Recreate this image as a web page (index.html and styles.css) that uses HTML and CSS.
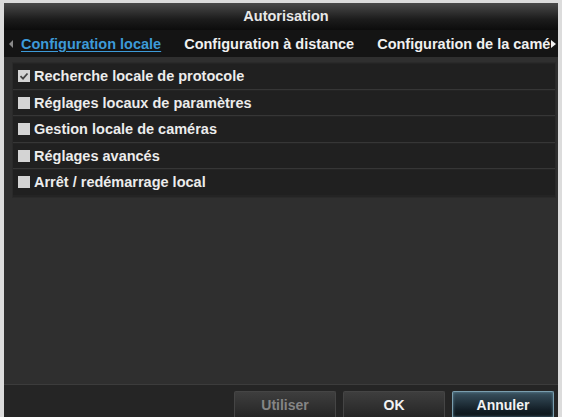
FILE: index.html
```html
<!DOCTYPE html>
<html lang="fr">
<head>
<meta charset="utf-8">
<title>Autorisation</title>
<link rel="stylesheet" href="styles.css">
</head>
<body>
<div class="window">
  <div class="titlebar">Autorisation</div>
  <div class="tabs">
    <span class="arrow arrow-left"></span>
    <span class="tab active">Configuration locale</span>
    <span class="tab">Configuration à distance</span>
    <span class="tab last">Configuration de la camé</span>
    <span class="arrow arrow-right"></span>
  </div>
  <div class="content">
    <ul class="list">
      <li class="row"><span class="cb checked"><svg viewBox="0 0 12 12" width="12" height="12"><path d="M2.5 6.2 L5 8.6 L9.5 3.5" fill="none" stroke="#444" stroke-width="1.8"/></svg></span>Recherche locale de protocole</li>
      <li class="row"><span class="cb"></span>Réglages locaux de paramètres</li>
      <li class="row"><span class="cb"></span>Gestion locale de caméras</li>
      <li class="row"><span class="cb"></span>Réglages avancés</li>
      <li class="row"><span class="cb"></span>Arrêt / redémarrage local</li>
    </ul>
  </div>
  <div class="footer">
    <button class="btn disabled">Utiliser</button>
    <button class="btn">OK</button>
    <button class="btn primary">Annuler</button>
  </div>
</div>
</body>
</html>
```
FILE: styles.css
```css
html, body {
  margin: 0;
  padding: 0;
  height: 100%;
}
body {
  background: #dcdcdc;
  font-family: "Liberation Sans", Arial, sans-serif;
  overflow: hidden;
}
.window {
  margin: 3px 4px 0 4px;
  height: 414px;
  display: flex;
  flex-direction: column;
  background: #323232;
}
.titlebar {
  height: 27px;
  line-height: 27px;
  text-align: center;
  padding-left: 10px;
  color: #e8e8e8;
  font-size: 14.5px;
  font-weight: bold;
  background: linear-gradient(#4a4a4a, #1c1c1c 60%, #0c0c0c);
}
.tabs {
  height: 26px;
  background: #141414;
  display: flex;
  align-items: center;
  padding-left: 5px;
  padding-top: 1px;
  color: #f0f0f0;
  font-size: 14.5px;
  font-weight: bold;
}
.arrow {
  width: 0;
  height: 0;
  border-top: 4px solid transparent;
  border-bottom: 4px solid transparent;
}
.arrow-left {
  border-right: 4px solid #8a8a8a;
  margin-right: 8px;
}
.arrow-right {
  border-left: 5px solid #f0f0f0;
  margin-left: 1px;
}
.tab {
  white-space: nowrap;
  margin-right: 23px;
}
.tab.last {
  margin-right: 0;
}
.tab.active {
  color: #3d9ad8;
  text-decoration: underline;
  text-underline-offset: 2px;
}
.content {
  flex: 1;
  padding: 5px 2px 0 8px;
  background: #2f2f2f;
}
.list {
  list-style: none;
  margin: 0;
  padding: 1px 0;
  background: #242424;
  border: 1px solid #2a2a2a;
}
.row {
  display: flex;
  align-items: center;
  height: 24.5px;
  margin: 0 0 1px 0;
  padding-left: 5px;
  background: #202020;
  border-bottom: 1px solid #363636;
  color: #ececec;
  font-size: 14.5px;
  font-weight: bold;
}
.row:last-child {
  border-bottom: none;
}
.cb {
  width: 12px;
  height: 12px;
  background: #d4d4d4;
  margin-right: 4px;
  display: flex;
}
.footer {
  height: 32px;
  background: #252525;
  border-top: 1px solid #3c3c3c;
  display: flex;
  justify-content: flex-end;
  align-items: flex-end;
  gap: 7px;
  padding-right: 4px;
}
.btn {
  width: 102px;
  height: 26px;
  margin: 0;
  border: 1px solid #454545;
  border-bottom: none;
  border-radius: 2px 2px 0 0;
  background: linear-gradient(#3e3e3e, #262626);
  color: #f2f2f2;
  font-family: "Liberation Sans", Arial, sans-serif;
  font-size: 14px;
  font-weight: bold;
  padding: 0;
}
.btn.disabled {
  color: #858585;
}
.btn.primary {
  border-color: #7a9eae;
  box-shadow: inset 0 0 3px #5d8798;
  background: linear-gradient(#3a5260, #142028 70%, #0c1418);
}
```
